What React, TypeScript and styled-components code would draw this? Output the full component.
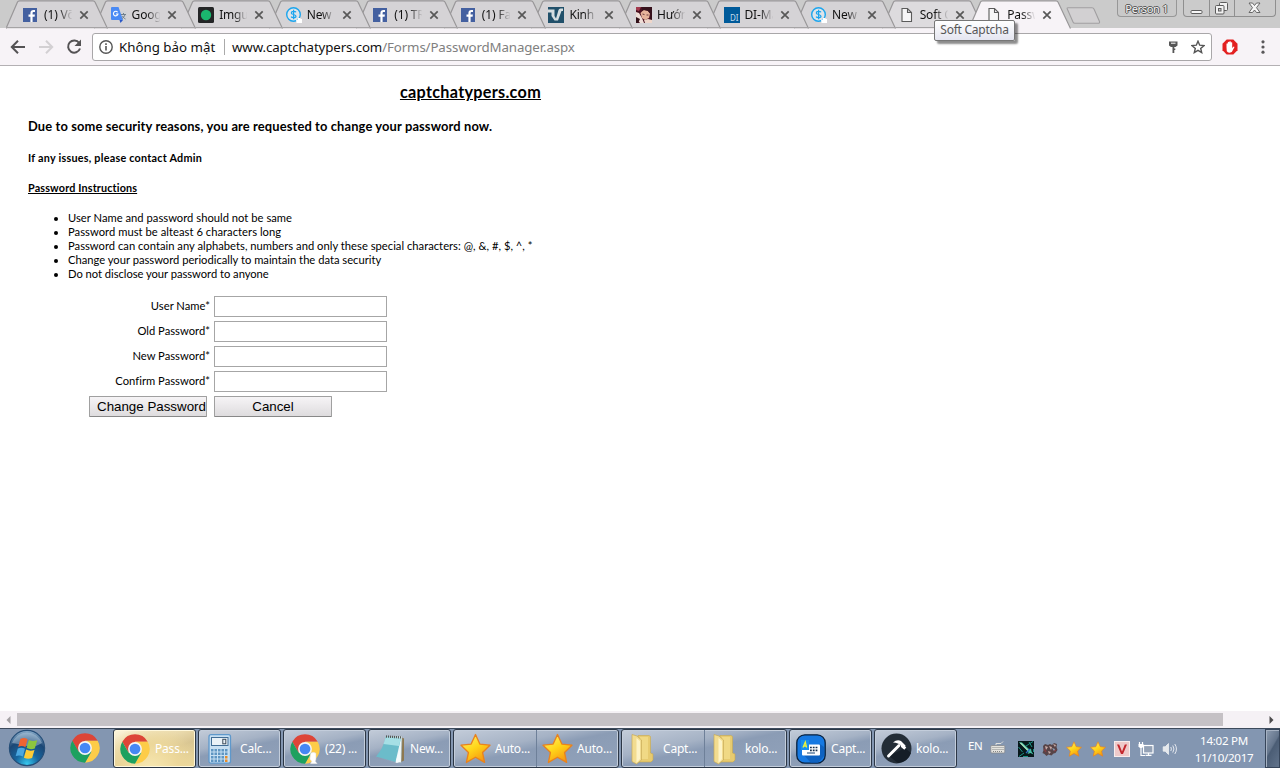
import React from "react";
import styled, { createGlobalStyle } from "styled-components";

const UI = `"Noto Sans", "Open Sans", sans-serif`;

const GlobalStyle = createGlobalStyle`
  * { box-sizing: border-box; }
  body { margin: 0; background: #fff; overflow: hidden; }
  ul, p, h1, h2 { margin: 0; padding: 0; }
  svg { display: block; flex: none; }
`;

const Screen = styled.div`
  width: 1280px;
  height: 768px;
  display: flex;
  flex-direction: column;
  overflow: hidden;
  background: #fff;
  font-family: ${UI};
`;

/* ---------- tab strip ---------- */

const TabStrip = styled.div`
  position: relative;
  height: 28px;
  flex: none;
  display: flex;
  padding-left: 6px;
  background: #cbcbcb;
  z-index: 2;
`;

const TabBox = styled.div<{ $z: number }>`
  position: relative;
  z-index: ${(p) => p.$z};
  flex: none;
  width: 102px;
  height: 29px;
  margin-right: -14.45px;
  padding: 1px 0 0 17px;
  display: flex;
  align-items: center;
`;

const TabShape = styled.svg`
  position: absolute;
  left: 0;
  top: 0;
`;

const TabIcon = styled.div`
  position: relative;
  width: 16px;
  display: flex;
  margin-right: 5px;
`;

const TabTitle = styled.div`
  position: relative;
  width: 29px;
  overflow: hidden;
  white-space: nowrap;
  font-size: 12px;
  line-height: 18px;
  letter-spacing: -0.15px;
  color: #111;
  mask-image: linear-gradient(90deg, #000 50%, transparent 98%);
`;

const TabClose = styled.div`
  position: relative;
  margin-left: 6px;
`;

const NewTab = styled.div`
  margin: 7px 0 0 9.2px;
`;

const PersonButton = styled.div`
  margin-left: 14.8px;
  width: 60px;
  height: 17px;
  border: 1px solid #979797;
  border-top: none;
  border-radius: 0 0 4px 4px;
  background: #c9c9c9;
  text-align: center;
  font-size: 11px;
  line-height: 17px;
  letter-spacing: -0.3px;
  color: #f5f5f5;
  text-shadow: 1px 0 #555, -1px 0 #555, 0 1px #555, 0 -1px #555;
`;

const WindowControls = styled.div`
  display: flex;
  margin-left: 6px;
  width: 93px;
  height: 17px;
  border: 1px solid #8f8f8f;
  border-top: none;
  border-radius: 0 0 4px 4px;
`;

const Control = styled.div<{ $w: number }>`
  width: ${(p) => p.$w}px;
  display: flex;
  justify-content: center;
  align-items: center;
  & + & { border-left: 1px solid #8f8f8f; }
`;

const Tooltip = styled.div`
  position: absolute;
  left: 934px;
  top: 20px;
  width: 81px;
  height: 21px;
  z-index: 30;
  border: 1px solid #767676;
  border-radius: 2px;
  background: linear-gradient(#fff, #e4e5f0);
  box-shadow: 3px 3px 2px rgba(0, 0, 0, 0.45);
  font-size: 12px;
  line-height: 18px;
  letter-spacing: -0.25px;
  text-align: center;
  white-space: nowrap;
  color: #575757;
`;

/* ---------- toolbar ---------- */

const Toolbar = styled.div`
  height: 38px;
  flex: none;
  display: flex;
  align-items: center;
  padding: 0 8px 0 9px;
  background: #f7f3f7;
  border-bottom: 1px solid #b3b0b3;
`;

const NavIcons = styled.div`
  display: flex;
  gap: 10px;
  width: 83px;
`;

const AddressBar = styled.div`
  display: flex;
  align-items: center;
  width: 1120px;
  height: 28px;
  padding: 0 6px 0 6px;
  border: 1px solid #a9a7a9;
  border-radius: 3px;
  background: #fff;
  white-space: nowrap;
  color: #111;
`;

const SecurityLabel = styled.span`
  width: 98px;
  margin-left: 6px;
  font-size: 13.3px;
`;

const Divider = styled.span`
  width: 1px;
  height: 16px;
  margin: 0 7px 0 7px;
  background: #aaa;
`;

const Url = styled.span`
  flex: 1;
  font-size: 13.3px;
  letter-spacing: -0.125px;
  span { color: #808080; }
`;

const AddressIcons = styled.div`
  display: flex;
  align-items: center;
  gap: 11px;
`;

const ToolbarEnd = styled.div`
  flex: 1;
  display: flex;
  align-items: center;
  justify-content: space-between;
  padding: 0 7px 0 10px;
`;

/* ---------- page ---------- */

const Page = styled.main`
  flex: 1;
  padding-left: 28px;
  font-family: Lato, sans-serif;
  color: #000;
`;

const SiteName = styled.h1`
  width: 885px;
  margin-top: 16px;
  text-align: center;
  font-size: 16.2px;
  line-height: 20px;
  letter-spacing: 0.3px;
  font-weight: 700;
  text-decoration: underline;
`;

const Notice = styled.h2`
  margin-top: 15px;
  font-size: 12.9px;
  line-height: 18px;
  font-weight: 700;
  letter-spacing: 0.13px;
`;

const SmallBold = styled.p<{ $underline?: boolean; $ls?: number }>`
  margin-top: 16px;
  font-size: 10.8px;
  line-height: 14px;
  font-weight: 700;
  letter-spacing: ${(p) => p.$ls ?? 0}px;
  text-decoration: ${(p) => (p.$underline ? "underline" : "none")};
`;

const Rules = styled.ul`
  margin-top: 16px;
  padding-left: 40px;
`;

const Rule = styled.li<{ $ls?: number }>`
  font-size: 11.2px;
  line-height: 14px;
  letter-spacing: ${(p) => p.$ls ?? 0}px;
`;

const Form = styled.form`
  margin: 15px 0 0 61px;
  display: grid;
  grid-template-columns: 121px 173px;
  column-gap: 4px;
  row-gap: 4px;
`;

const Label = styled.label`
  text-align: right;
  font-size: 11.2px;
  line-height: 20px;
  letter-spacing: 0.02px;
`;

const Field = styled.input`
  width: 173px;
  height: 21px;
  border: 1px solid #a6a6a6;
  background: #fff;
`;

const FormButton = styled.button`
  width: 118px;
  height: 21px;
  padding: 0 0 0 7px;
  border: 1px solid #a0a0a0;
  border-bottom-color: #888;
  border-radius: 1px;
  background: linear-gradient(#f6f4f6, #dedcde);
  font: 13.33px "Liberation Sans", sans-serif;
  white-space: nowrap;
  text-align: left;
  color: #000;
`;

const CenteredButton = styled(FormButton)`
  padding: 0;
  text-align: center;
`;

/* ---------- scrollbar ---------- */

const ScrollTrack = styled.div`
  height: 17px;
  flex: none;
  display: flex;
  align-items: center;
  background: #f5f1f5;
`;

const ScrollArrow = styled.div`
  width: 17px;
  display: flex;
  justify-content: center;
`;

const ScrollThumb = styled.div`
  width: 1206px;
  height: 13px;
  margin-right: 40px;
  background: #c5c1c5;
`;

/* ---------- taskbar ---------- */

const Taskbar = styled.div`
  height: 40px;
  flex: none;
  display: flex;
  background: #8396b1;
  border-top: 1px solid #3d4a5c;
`;

const StartArea = styled.div`
  width: 55px;
  padding: 0 0 0 8px;
`;

const PinnedArea = styled.div`
  width: 58px;
  padding: 4px 0 0 15px;
`;

const TaskGroup = styled.div<{ $active?: boolean }>`
  flex: none;
  height: 39px;
  margin-right: 2px;
  display: flex;
  border: 1px solid #2c3746;
  border-radius: 3px;
  box-shadow: inset 0 0 0 1px ${(p) => (p.$active ? "#fff8dc" : "#c3cddb")};
  background: ${(p) =>
    p.$active
      ? "radial-gradient(ellipse at 45% 110%, #f8e9b4 0%, #ecd79a 45%, rgba(255,255,255,0) 80%), linear-gradient(160deg, #fdf6dd 0%, #e9d9ab 40%, #d8c592 60%, #ecd99c 100%)"
      : "linear-gradient(168deg, #c3ccd9 0%, #a5b2c5 36%, #8b9cb5 50%, #91a2ba 100%)"};
`;

const TaskItem = styled.div<{ $w: number }>`
  width: ${(p) => p.$w}px;
  display: flex;
  align-items: center;
  padding-left: 5px;
  & + & { border-left: 1px solid #6e8099; padding-left: 4px; }
`;

const TaskIcon = styled.div`
  width: 32px;
  display: flex;
  justify-content: center;
`;

const TaskText = styled.span`
  margin-left: 4px;
  font-size: 12px;
  letter-spacing: -0.2px;
  color: #fff;
  white-space: nowrap;
`;

const Tray = styled.div`
  flex: 1;
  display: flex;
  align-items: center;
  padding-left: 9px;
  color: #fff;
  font-size: 12px;
`;

const Language = styled.span`
  width: 22px;
  margin-top: -6px;
  font-size: 11.5px;
  letter-spacing: -0.3px;
`;

const TrayIcons = styled.div`
  display: flex;
  align-items: center;
  gap: 8px;
`;

const KeyboardSlot = styled.div`
  margin: -3px 4px 0 0;
`;

const Clock = styled.div`
  flex: 1;
  padding-left: 5px;
  text-align: center;
  line-height: 17px;
  font-size: 11.6px;
  letter-spacing: -0.3px;
`;

const ShowDesktop = styled.div`
  width: 15px;
  height: 39px;
  border: 1px solid #36455a;
  box-shadow: inset 1px 1px 0 #a5b1c2;
  background: linear-gradient(120deg, #8e9db1 0%, #64758c 45%, #4b5d75 50%, #61738b 100%);
`;

/* ---------- icons ---------- */

const FacebookIcon = () => (
  <svg width="14" height="14" viewBox="0 0 14 14">
    <rect width="14" height="14" fill="#4460a0" />
    <path d="M9.6 14V8.8h2l.3-2.2H9.6V5.2c0-.7.3-1.1 1.1-1.1H12V2.1c-.3 0-.9-.1-1.6-.1C8.600 2 7.400 3 7.400 4.900v1.700H5.500v2.200h1.900V14z" fill="#fff" />
  </svg>
);

const TranslateIcon = () => (
  <svg width="16" height="16" viewBox="0 0 16 16">
    <path d="M6 4h9a1 1 0 0 1 1 1v9a1 1 0 0 1-1 1H9z" fill="#d0d2d6" />
    <path d="M0 1a1 1 0 0 1 1-1h6.500l4.500 13H1a1 1 0 0 1-1-1z" fill="#4a8af4" />
    <path d="M8.500 13H12l-2.500 3z" fill="#2a56c6" />
    <path d="M6.600 5.200A2.300 2.300 0 1 0 7 7H4.900" fill="none" stroke="#fff" strokeWidth="1.100" />
    <path d="M10 7.500h5M12.500 6v1.500M14 7.500c-.5 2-2 3.500-3 4.200M11.500 9c.7 1.500 2 2.600 3 3" fill="none" stroke="#71808c" strokeWidth="1" />
  </svg>
);

const ImgurIcon = () => (
  <svg width="16" height="16" viewBox="0 0 16 16">
    <rect width="16" height="16" rx="1.500" fill="#242526" />
    <circle cx="8" cy="8" r="5.200" fill="#1bb76e" />
  </svg>
);

const DollarIcon = () => (
  <svg width="16" height="16" viewBox="0 0 16 16">
    <circle cx="7.500" cy="7.500" r="6.800" fill="#dfe4e9" stroke="#1ba5ee" strokeWidth="1.400" />
    <path d="M10 5.200C9.500 4.300 5.300 3.800 5.300 6c0 2 4.700 1 4.700 3.200 0 2-4.200 1.700-4.900.4M7.600 2.800v9.500" fill="none" stroke="#1ba5ee" strokeWidth="1.200" />
    <path d="M10 12.500h2v-1.500h2.500v1H16v4h-5.500z" fill="#fff" />
  </svg>
);

const KinhIcon = () => (
  <svg width="16" height="16" viewBox="0 0 16 16">
    <rect width="16" height="16" fill="#21506a" />
    <path d="M0 2.500h6.500V9l1.500 2.500L10.500 3q.4-1.500 2-1.500H15V4h-1.500L10 13.500H6.500L3.500 9V5.500H0z" fill="#d6dde0" />
  </svg>
);

const PortraitIcon = () => (
  <svg width="16" height="16" viewBox="0 0 16 16">
    <rect width="16" height="16" fill="#4a1020" />
    <path d="M4.500 6l3-3 4 .5 2.500 3-1 4.500-4 2-3-2z" fill="#e6b39b" />
    <path d="M0 5l3 1 3 5 2 5H4L0 11z" fill="#f0ded7" />
    <path d="M0 10l4 2-2 4H0z" fill="#301018" />
    <path d="M6 0h10v13l-2-1 .5-5-2.500-3-4-1-2 1z" fill="#35101b" />
    <path d="M6.500 7l2 .6M10.500 8h2" stroke="#51202a" strokeWidth=".8" />
    <path d="M8 13l4-1 4 1v3H9z" fill="#efd6ca" />
    <path d="M0 0h5L3 4 0 3z" fill="#a33a4e" />
  </svg>
);

const DiIcon = styled.div`
  width: 16px;
  height: 16px;
  padding: 5px 1px 0 0;
  background: #005a9a;
  color: #c4dbec;
  font-size: 8px;
  line-height: 11px;
  text-align: right;
`;

const PageIcon = () => (
  <svg width="16" height="16" viewBox="0 0 16 16">
    <path d="M3 1.500h5.500L12.500 5.500V14.500H3zM8.500 1.500v4h4" fill="#f7f6f7" stroke="#5b5b5b" strokeWidth="1.100" />
  </svg>
);

const CloseIcon = () => (
  <svg width="10" height="10" viewBox="0 0 10 10">
    <path d="M1.300 1.300l7.400 7.400M8.700 1.300L1.300 8.700" stroke="#585858" strokeWidth="1.700" />
  </svg>
);

const ChromeIcon = ({ badge = false }: { badge?: boolean }) => (
  <svg width="30" height="30" viewBox="-0.300 -0.300 24.600 24.600">
    <path d="M1.600 6A12 12 0 0 1 22.400 6H12L6.800 15z" fill="#dd4537" />
    <path d="M22.400 6A12 12 0 0 1 12 24L17.200 15 12 6z" fill="#fdcc48" />
    <path d="M12 24A12 12 0 0 1 1.600 6L6.800 15H17.200z" fill="#1da15f" />
    <circle cx="12" cy="12" r="5.700" fill="#f4f4f4" />
    <circle cx="12" cy="12" r="4.400" fill="#4587f4" />
    {badge && <path d="M16.500 15.500q2.500-1.500 4.500 0v5l-.5 1.500 1.500 2h-5.500l1-2-1.500-1.500z" fill="#fff" stroke="#d8d8d8" strokeWidth=".4" />}
  </svg>
);

const StartOrb = () => (
  <svg width="38" height="38" viewBox="0 0 38 38">
    <defs>
      <radialGradient id="orb" cx="50%" cy="95%" r="95%">
        <stop offset="0" stopColor="#37c8ee" />
        <stop offset=".35" stopColor="#17669f" />
        <stop offset=".7" stopColor="#1c4775" />
        <stop offset="1" stopColor="#8fb2cf" />
      </radialGradient>
    </defs>
    <circle cx="19" cy="19" r="17.600" fill="url(#orb)" stroke="#254e78" strokeWidth="1.200" />
    <path d="M4 14a16 16 0 0 1 30 0q-8 5-15 3T4 14z" fill="#c7dbe9" opacity=".42" />
    <path d="M12.300 10q3.800-2 7.300.3l-2.200 7.900q-3.300-2.100-7.200-.3z" fill="#ee6432" />
    <path d="M20.900 11q3.900 2 8.300.3l-2.400 8.100q-4.200 1.700-8.100-.4z" fill="#8cc63e" />
    <path d="M9.800 19.500q3.900-1.800 7.200.3l-2.200 7.700q-3.300-2-7.100-.4z" fill="#4aa7e0" />
    <path d="M18.200 20.600q3.900 2 8.300.3L24.100 29q-4.200 1.600-8.200-.3z" fill="#fdcb36" />
  </svg>
);

const StarIcon = ({ size }: { size: number }) => (
  <svg width={size} height={size} viewBox="0 0 30 30">
    <defs>
      <linearGradient id="star" x1="0" y1="0" x2=".6" y2="1">
        <stop offset="0" stopColor="#fff27c" />
        <stop offset=".55" stopColor="#ffd619" />
        <stop offset="1" stopColor="#f79a10" />
      </linearGradient>
    </defs>
    <path d="M15 1.500l4.200 9.200 9.800 1.100-7.200 7 2 9.700-8.800-5-8.800 5 2-9.700-7.200-7 9.800-1.100z" fill="url(#star)" stroke="#e8821e" strokeWidth="1.300" strokeLinejoin="round" />
  </svg>
);

const CalculatorIcon = () => (
  <svg width="24" height="30" viewBox="0 0 24 30">
    <rect x="1" y=".7" width="21.500" height="28.500" rx="2" fill="#c7dff2" stroke="#5e98cb" strokeWidth="1.300" />
    <rect x="3.500" y="3.500" width="16.500" height="8" fill="#e9f1f7" stroke="#416d96" />
    <rect x="14.800" y="5.300" width="3" height="4.500" fill="none" stroke="#3c4b5a" />
    {[15, 18.5, 22, 25.5].map((y) =>
      [3, 6.5, 10, 13.5, 17].map((x) => (
        <rect key={`${x}-${y}`} x={x} y={y} width="2.500" height="2.500" fill={x === 17 && y > 20 ? "#e98c28" : "#5f95c2"} />
      ))
    )}
  </svg>
);

const NotepadIcon = () => (
  <svg width="31" height="30" viewBox="0 0 31 30">
    <path d="M26 3l3 1.500v22L26 28z" fill="#8d7850" />
    <path d="M12 3l15-1-1 27-9-3z" fill="#eef5f6" stroke="#9fb1b5" strokeWidth=".6" />
    <path d="M11 2.500L26 4l-5.500 24L1 22.500Q8 15 11 2.500z" fill="#6bbcca" />
    <path d="M11 2.500L26 4l-2 8L8.500 10z" fill="#a6dfe5" />
    <path d="M2 23l18.500 5.500 4-13 1.500 12-4 1.500z" fill="#f5fbfc" />
    <path d="M11 2.500l16 1" stroke="#555" strokeWidth="2.300" strokeDasharray="1 1" />
  </svg>
);

const FolderIcon = () => (
  <svg width="24" height="32" viewBox="0 0 24 32">
    <path d="M7 2.500h11l1.500 1V20l2.500 1v6l-2 2H7z" fill="#e7cb70" stroke="#c9a94e" strokeWidth=".6" />
    <path d="M9 4h8v22H9z" fill="#f0d985" />
    <path d="M1 1.500l5 1.500 4.500 4v20L5.500 31 1 28.500z" fill="#f2dc90" stroke="#c7ab56" strokeWidth=".7" />
    <path d="M5.500 5L9 8v18l-3.500 4z" fill="#fdf3c6" />
  </svg>
);

const CaptchaAppIcon = () => (
  <svg width="30" height="30" viewBox="0 0 30 30">
    <rect x=".8" y=".8" width="28.400" height="28.400" rx="8" fill="#1679e2" stroke="#08203d" strokeWidth="1.300" />
    <path d="M7 20l8 9h7l6-7V13l-4-3z" fill="#0b58b3" opacity=".7" />
    <rect x="6" y="10.500" width="18" height="11" rx="1" fill="#fff" />
    <rect x="5" y="6" width="8" height="10" fill="#1590ef" />
    <path d="M7 13.500L9.300 8l1.300 5.500M8 12h2.500" fill="none" stroke="#eaf43c" strokeWidth="1.300" />
    <path d="M14 13.500h8M14 16.300h8" stroke="#17314d" strokeWidth="1.700" strokeDasharray="1.800 1" />
    <path d="M11 19h8" stroke="#496d94" strokeWidth="1.300" />
  </svg>
);

const HammerIcon = () => (
  <svg width="31" height="31" viewBox="0 0 31 31">
    <circle cx="15.500" cy="15.500" r="15" fill="#232d37" />
    <path d="M24 15l6 5a15 15 0 0 1-13 10L8 23z" fill="#151e27" />
    <path d="M7.500 23L18 12.500" stroke="#fff" strokeWidth="3" strokeLinecap="round" />
    <path d="M12 9.500q4-3.500 8-1.500l4.500 4.500-.2 1.200 1 .8-2 2.200-3.300-2.700v-1.500q-2.500-2.700-8-3z" fill="#fff" />
  </svg>
);

const KeyboardIcon = () => (
  <svg width="16" height="14" viewBox="0 0 16 14">
    <path d="M6 5.500V3.500h5l2-2" fill="none" stroke="#e2e2de" />
    <rect x=".8" y="5.500" width="14" height="7.500" rx="1" fill="#e4e3de" stroke="#85888b" strokeWidth=".8" />
    <path d="M2.500 7.500h11M2.500 9.500h11M3 11.500h9" stroke="#858686" strokeDasharray="1 1" />
  </svg>
);

const SwordIcon = () => (
  <svg width="16" height="16" viewBox="0 0 16 16">
    <rect width="16" height="16" fill="#07171a" />
    <path d="M15 .5L8 5M1 15.500l5-3.500M.5 6l4 5M11 1l3 5M15.500 8v3M5 15.500h5" stroke="#1d9385" />
    <path d="M1 1l3 .5 7.500 7 1.500-1 .5 3 2 3-3-1.500-3 1 1-2-8-8z" fill="#49bda4" />
    <path d="M2.500 2l8 8" stroke="#eef6c7" strokeWidth="1" />
    <path d="M8 12l4-4" stroke="#2c6fc0" strokeWidth="1.300" />
  </svg>
);

const CreatureIcon = () => (
  <svg width="16" height="14" viewBox="0 0 16 14">
    <path d="M1 4l2-2 3 1 2-1 2 1 2-2 3 1-.5 3 1 3-2 3-2 .5-2 2-3-1-2 1.500-2-2-2-1 1-3z" fill="#574447" />
    <path d="M3 4l3 1-2 3zM7 4l3 1-1 3zM6 9l3 1-2 2zM11 2l3 1-1 2z" fill="#c9aaa5" />
    <path d="M2 7l2 3M12 9l2-1" stroke="#8b3b40" strokeWidth="1.200" />
    <path d="M10 6l3 1-1 2z" fill="#8da0b8" />
  </svg>
);

const UnikeyIcon = () => (
  <svg width="16" height="16" viewBox="0 0 16 16">
    <rect x=".5" y=".5" width="15" height="15" fill="#eecaca" stroke="#f8eded" />
    <path d="M3 3.500h2.200L8 10.500l2.800-7H13L9 13H7z" fill="#c3272d" />
  </svg>
);

const NetworkIcon = () => (
  <svg width="16" height="16" viewBox="0 0 16 16">
    <rect x="5.500" y="4.500" width="9.500" height="7.500" fill="#93a1b5" stroke="#fff" strokeWidth="1.200" />
    <path d="M7.500 14.300h6M10.500 12v2M1.500 1v2.500M4.500 1v2.500M3 6v8.500h4" fill="none" stroke="#fff" strokeWidth="1.200" />
    <path d="M.5 3h5v2.500L4 7H2L.5 5.500z" fill="#fff" />
  </svg>
);

const SpeakerIcon = () => (
  <svg width="16" height="16" viewBox="0 0 16 16">
    <path d="M1.200 5.800h2L6.500 2.500v11L3.200 10.200h-2z" fill="#e5e8ec" stroke="#f4f5f7" strokeWidth=".7" />
    <path d="M8.800 6q1.200 2 0 4M10.800 4.500q2.300 3.500 0 7M12.800 3q3.300 5 0 10" fill="none" stroke="#eef1f5" strokeWidth=".9" />
  </svg>
);

/* ---------- data ---------- */

const tabs: { title: string; icon: React.ReactNode; tint?: string }[] = [
  { title: "(1) Võ", icon: <FacebookIcon /> },
  { title: "Google", icon: <TranslateIcon /> },
  { title: "Imgur", icon: <ImgurIcon /> },
  { title: "New", icon: <DollarIcon /> },
  { title: "(1) TRA", icon: <FacebookIcon /> },
  { title: "(1) Fac", icon: <FacebookIcon /> },
  { title: "Kinh", icon: <KinhIcon /> },
  { title: "Hướng", icon: <PortraitIcon /> },
  { title: "DI-Ma", icon: <DiIcon>DI</DiIcon> },
  { title: "New", icon: <DollarIcon /> },
  { title: "Soft C", icon: <PageIcon />, tint: "#dddbde" },
  { title: "Passw", icon: <PageIcon />, tint: "#f7f3f7" },
];

const tasks: { active?: boolean; items: [React.ReactNode, string][] }[] = [
  { active: true, items: [[<ChromeIcon />, "Pass..."]] },
  { items: [[<CalculatorIcon />, "Calc..."]] },
  { items: [[<ChromeIcon badge />, "(22) ..."]] },
  { items: [[<NotepadIcon />, "New..."]] },
  { items: [[<StarIcon size={31} />, "Auto..."], [<StarIcon size={31} />, "Auto..."]] },
  { items: [[<FolderIcon />, "Capt..."], [<FolderIcon />, "kolo..."]] },
  { items: [[<CaptchaAppIcon />, "Capt..."]] },
  { items: [[<HammerIcon />, "kolo..."]] },
];

const rules: [string, number][] = [
  ["User Name and password should not be same", 0.02],
  ["Password must be alteast 6 characters long", 0.04],
  ["Password can contain any alphabets, numbers and only these special characters: @, &, #, $, ^, *", 0.02],
  ["Change your password periodically to maintain the data security", 0],
  ["Do not disclose your password to anyone", -0.03],
];

const fields = ["User Name*", "Old Password*", "New Password*", "Confirm Password*"];

export default function App() {
  return (
    <Screen>
      <GlobalStyle />
      <TabStrip>
        {tabs.map((t, i) => {
          const active = i === tabs.length - 1;
          return (
            <TabBox key={i} $z={active ? 20 : 15 - i}>
              <TabShape width="102" height="29" viewBox="0 0 102 29">
                <path
                  d="M0 28.500L11.500 2Q12 .8 13.500.8H87Q88.500.8 89 2L101.500 28.500"
                  fill={t.tint ?? "#d5d3d6"}
                  stroke="#999799"
                  strokeWidth="1.200"
                />
                {!active && <path d="M0 27.500H102" stroke="#a5a3a5" />}
              </TabShape>
              <TabIcon>{t.icon}</TabIcon>
              <TabTitle>{t.title}</TabTitle>
              <TabClose><CloseIcon /></TabClose>
            </TabBox>
          );
        })}
        <NewTab>
          <svg width="36" height="17" viewBox="0 0 36 17">
            <path d="M2 .7H26Q27.500.7 28 2L33.500 14.500Q34 16.300 32 16.300H9Q7.500 16.300 7 15L1.300 2Q.7.700 2 .7z" fill="#d2d0d2" stroke="#a19fa1" strokeWidth="1.100" />
          </svg>
        </NewTab>
        <PersonButton>Person 1</PersonButton>
        <WindowControls>
          <Control $w={25}>
            <svg width="13" height="13" viewBox="0 0 13 13"><rect x="1" y="8.500" width="11" height="3" rx="1" fill="#f6f6f6" stroke="#5c5c5c" /></svg>
          </Control>
          <Control $w={25}>
            <svg width="13" height="13" viewBox="0 0 13 13"><g fill="#f1f1f1" stroke="#5c5c5c"><rect x="4.500" y=".5" width="8" height="8" rx="1" /><rect x=".5" y="3.500" width="8.500" height="8.500" rx="1" /><rect x="3.500" y="6.500" width="2.500" height="2.500" fill="#cbcbcb" /></g></svg>
          </Control>
          <Control $w={41}>
            <svg width="13" height="12" viewBox="0 0 13 12"><path d="M1 1h3.500l2 2.500L8.500 1H12L8.500 5.700 12 10.500H8.500l-2-2.500-2 2.500H1l3.500-4.800z" fill="#f6f6f6" stroke="#5c5c5c" strokeWidth=".9" /></svg>
          </Control>
        </WindowControls>
        <Tooltip>Soft Captcha</Tooltip>
      </TabStrip>

      <Toolbar>
        <NavIcons>
          <svg width="18" height="18" viewBox="0 0 18 18"><path d="M16 9H3M9 2.800L2.800 9 9 15.200" fill="none" stroke="#545254" strokeWidth="2" /></svg>
          <svg width="18" height="18" viewBox="0 0 18 18"><path d="M2 9H15M9 2.800L15.200 9 9 15.200" fill="none" stroke="#d3d0d3" strokeWidth="2" /></svg>
          <svg width="18" height="18" viewBox="0 0 18 18"><path d="M14.200 5A6.100 6.100 0 1 0 15 10.500" fill="none" stroke="#545254" strokeWidth="2" /><path d="M16 1.500V8H9.500z" fill="#545254" /></svg>
        </NavIcons>
        <AddressBar>
          <svg width="14" height="14" viewBox="0 0 14 14"><circle cx="7" cy="7" r="6.200" fill="none" stroke="#555" strokeWidth="1.400" /><path d="M7 6v4.500M7 3.300v1.600" stroke="#555" strokeWidth="1.600" /></svg>
          <SecurityLabel>Không bảo mật</SecurityLabel>
          <Divider />
          <Url>www.captchatypers.com<span>/Forms/PasswordManager.aspx</span></Url>
          <AddressIcons>
            <svg width="14" height="16" viewBox="0 0 14 16"><path d="M3 2.500h8.500v4L9.500 8H8.300v1.500h1v1.500h-1v3H6.500V8H5L3 6.500z" fill="#565656" /><path d="M5 4.200h4.500" stroke="#fff" /></svg>
            <svg width="14" height="14" viewBox="0 0 14 14"><path d="M7 1.200l1.700 4 4.300.4-3.300 2.800 1 4.200L7 10.400l-3.700 2.200 1-4.200L1 5.600l4.300-.4z" fill="none" stroke="#555" strokeWidth="1.400" /></svg>
          </AddressIcons>
        </AddressBar>
        <ToolbarEnd>
          <svg width="16" height="16" viewBox="0 0 16 16"><path d="M4.700.5h6.600l4.200 4.200v6.600l-4.200 4.200H4.700L.5 11.300V4.700z" fill="#e32020" /><path d="M4.500 8.500V4.700q.8-.8 1.300 0V3.200q.9-.8 1.500 0V2.600q.9-.8 1.500 0v.8q.9-.6 1.400.2V9l1.500-1.500q1 0 .6 1l-2.500 4.500q-3.500 1.800-5-.7z" fill="#fff" /></svg>
          <svg width="4" height="16" viewBox="0 0 4 16"><g fill="#595759"><circle cx="2" cy="2.800" r="1.600" /><circle cx="2" cy="8" r="1.600" /><circle cx="2" cy="13.200" r="1.600" /></g></svg>
        </ToolbarEnd>
      </Toolbar>

      <Page>
        <SiteName>captchatypers.com</SiteName>
        <Notice>Due to some security reasons, you are requested to change your password now.</Notice>
        <SmallBold $ls={0.24}>If any issues, please contact Admin</SmallBold>
        <SmallBold $underline $ls={0.15}>Password Instructions</SmallBold>
        <Rules>
          {rules.map(([text, ls]) => (
            <Rule key={text} $ls={ls}>{text}</Rule>
          ))}
        </Rules>
        <Form>
          {fields.map((f) => (
            <React.Fragment key={f}>
              <Label>{f}</Label>
              <Field />
            </React.Fragment>
          ))}
          <FormButton type="button">Change Password</FormButton>
          <CenteredButton type="button">Cancel</CenteredButton>
        </Form>
      </Page>

      <ScrollTrack>
        <ScrollArrow><svg width="5" height="8" viewBox="0 0 5 8"><path d="M4.500 0v8L.5 4z" fill="#a3a0a3" /></svg></ScrollArrow>
        <ScrollThumb />
        <ScrollArrow><svg width="5" height="8" viewBox="0 0 5 8"><path d="M.5 0v8l4-4z" fill="#4d4b4d" /></svg></ScrollArrow>
      </ScrollTrack>

      <Taskbar>
        <StartArea><StartOrb /></StartArea>
        <PinnedArea><ChromeIcon /></PinnedArea>
        {tasks.map((g, i) => (
          <TaskGroup key={i} $active={g.active}>
            {g.items.map(([icon, text], j) => (
              <TaskItem key={j} $w={j ? 82 : g.items.length > 1 ? 82 : 81}>
                <TaskIcon>{icon}</TaskIcon>
                <TaskText>{text}</TaskText>
              </TaskItem>
            ))}
          </TaskGroup>
        ))}
        <Tray>
          <Language>EN</Language>
          <TrayIcons>
            <KeyboardSlot><KeyboardIcon /></KeyboardSlot>
            <SwordIcon />
            <CreatureIcon />
            <StarIcon size={16} />
            <StarIcon size={16} />
            <UnikeyIcon />
            <NetworkIcon />
            <SpeakerIcon />
          </TrayIcons>
          <Clock>14:02 PM<br />11/10/2017</Clock>
          <ShowDesktop />
        </Tray>
      </Taskbar>
    </Screen>
  );
}
